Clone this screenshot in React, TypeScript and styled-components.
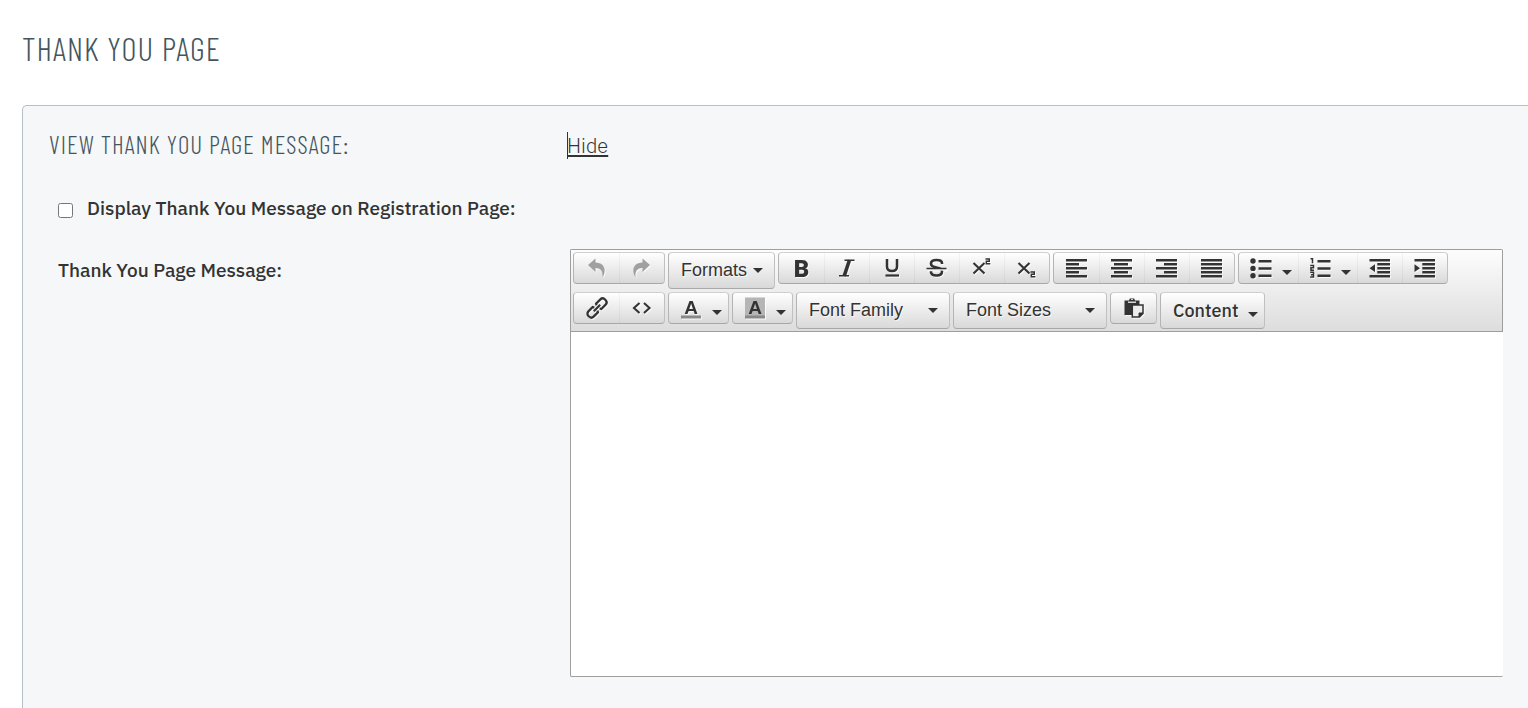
import React from "react";
import styled, { createGlobalStyle } from "styled-components";

const INK = "#333333";
const SLATE = "#455560";
const LINE = "#9e9e9e";
const SANS = `"IBM Plex Sans", Roboto, "Noto Sans", sans-serif`;
const NARROW = `"Barlow Condensed", "Liberation Sans Narrow", "Roboto Condensed", sans-serif`;
const ARIAL = `"Liberation Sans", Arial, sans-serif`;

const GlobalStyle = createGlobalStyle`
  *, *::before, *::after { box-sizing: border-box; }
  body { margin: 0; background: #ffffff; color: ${INK}; font-family: ${SANS}; }
`;

const Page = styled.main`
  min-height: 100vh;
  display: flex;
  flex-direction: column;
  padding: 26px 0 0 22px;
`;

const Title = styled.h1`
  margin: 0 0 35px;
  font: 300 33px/44px ${NARROW};
  letter-spacing: 1px;
  color: ${SLATE};
  text-transform: uppercase;
`;

const Panel = styled.section`
  flex: 1;
  padding: 18px 25px 31px 26px;
  background: #f5f7f9;
  border: 1px solid #b3bfc9;
  border-width: 1px 0 0 1px;
  border-top-left-radius: 5px;
`;

const PanelHeader = styled.header`
  display: grid;
  grid-template-columns: 518px 1fr;
  align-items: center;
  height: 40px;
`;

const SectionTitle = styled.h2`
  margin: 0;
  font: 300 25px/40px ${NARROW};
  letter-spacing: 1px;
  color: ${SLATE};
  text-transform: uppercase;
`;

const ToggleLink = styled.a`
  justify-self: start;
  margin-top: 2px;
  box-shadow: inset 1px 0 ${INK};
  font: 300 20px/27px ${SANS};
  color: ${INK};
  text-decoration: underline;
  text-decoration-thickness: 2px;
  text-underline-offset: 2px;
`;

const CheckRow = styled.div`
  display: flex;
  align-items: center;
  gap: 14px;
  height: 27px;
  margin: 30px 0 28px;
  padding-left: 9px;
`;

const CheckBox = styled.input`
  width: 15px;
  height: 15px;
  margin: 5px 0 0;
`;

const Label = styled.label`
  font: 500 19px/24px ${SANS};
`;

const EditorRow = styled.div`
  display: grid;
  grid-template-columns: 512px minmax(0, 1fr);
  align-items: start;
  padding-left: 9px;
`;

const EditorLabel = styled(Label)`
  padding-top: 9px;
`;

const Editor = styled.div`
  border: 1px solid ${LINE};
  border-right: 0;
  border-radius: 2px;
  background: #ffffff;
`;

const Toolbar = styled.div`
  display: flex;
  flex-direction: column;
  gap: 3px;
  padding: 2px;
  border: 1px solid ${LINE};
  border-width: 0 1px 1px 0;
  background: linear-gradient(#fdfdfd, #dddddd);
`;

const ToolRow = styled.div`
  display: flex;
  flex-wrap: wrap;
  align-items: flex-start;
  gap: 3px;
  min-height: 37px;
`;

const Group = styled.div`
  display: flex;
  border: 1px solid;
  border-color: #d0d0d0 #c0c0c0 #a8a8a8 #b4b4b4;
  border-radius: 4px;
  background: linear-gradient(#ffffff, #d9d9d9);
  overflow: hidden;
`;

const Tool = styled.button`
  display: flex;
  align-items: center;
  justify-content: center;
  width: 45px;
  height: 30px;
  padding: 0;
  border: 0;
  background: none;
  color: ${INK};

  & + & { box-shadow: inset 1px 0 rgba(0, 0, 0, 0.04); }
  &:disabled { color: #a0a0a0; }
`;

const SplitTool = styled(Tool)<{ $w: number }>`
  gap: 10px;
  width: ${({ $w }) => $w}px;
  padding-left: 5px;
`;

const MenuTool = styled.button<{ $w: number; $plex?: boolean }>`
  display: flex;
  align-items: center;
  justify-content: space-between;
  width: ${({ $w }) => $w}px;
  height: 35px;
  padding: 0 ${({ $plex }) => ($plex ? 6 : 11)}px ${({ $plex }) => ($plex ? 0 : 2)}px 12px;
  border: 0;
  background: none;
  color: ${INK};
  font: ${({ $plex }) => ($plex ? `500 18px/24px ${SANS}` : `400 18px/24px ${ARIAL}`)};
  text-shadow: 1px 1px rgba(255, 255, 255, 0.75);
`;

const Caret = styled.span<{ $low?: boolean }>`
  border: 5px solid transparent;
  border-top-color: ${INK};
  border-bottom: 0;
  margin-top: ${({ $low }) => ($low ? 8 : 2)}px;
`;

const Body = styled.textarea`
  display: block;
  width: 100%;
  height: 344px;
  padding: 8px;
  border: 0;
  border-radius: 2px;
  outline: 0;
  resize: none;
  background: #ffffff;
  font: 400 18px/24px ${SANS};
`;

const Svg = styled.svg`
  display: block;
  flex: none;
  overflow: visible;
  filter: drop-shadow(1px 1px 0 rgba(255, 255, 255, 0.8));
`;

type IconProps = { children: React.ReactNode };

/* Every glyph is drawn on a 22 x 20 grid. */
const Icon = ({ children }: IconProps) => (
  <Svg width="22" height="20" viewBox="0 0 22 20" fill="none" stroke="currentColor" aria-hidden="true">
    {children}
  </Svg>
);

const Bars = ({ rows }: { rows: [number, number][] }) => (
  <Icon>
    <g fill="currentColor" stroke="none">
      {rows.map(([x, w], i) => (
        <rect key={i} x={x} y={1 + i * 4} width={w} height="2.5" />
      ))}
    </g>
  </Icon>
);

const UndoShape = () => (
  <path
    d="M2 7 9.500 .5v4C16 4.800 19.500 8.500 18.500 14.200c-.3 2-1 3.600-2 5C17 13.500 15 10 9.500 10v4z"
    fill="currentColor"
    stroke="none"
  />
);

const Glyph = styled.text`
  fill: currentColor;
  stroke: none;
  text-anchor: middle;
`;

const Undo = () => <Icon><UndoShape /></Icon>;
const Redo = () => <Icon><g transform="translate(21 0) scale(-1 1)"><UndoShape /></g></Icon>;
const Bold = () => <Icon><Glyph x="10.500" y="18.500" fontFamily="Roboto" fontWeight="900" fontSize="24">B</Glyph></Icon>;
const Italic = () => (
  <Icon>
    <path d="M8.500 2.300H18.500M3 17.700H13" strokeWidth="1.600" />
    <path d="M13.500 2 8.200 18" strokeWidth="3.600" />
  </Icon>
);
const Underline = () => (
  <Icon>
    <path d="M6 1v7.500c0 3 2 4.500 5 4.500s5-1.500 5-4.500V1" strokeWidth="2.500" />
    <path d="M4.500 17.500h13.500" strokeWidth="2.200" />
  </Icon>
);
const Strike = () => (
  <Icon>
    <path d="M16 6V5c0-2-2-3-5.500-3S5 3 5 5.500 7 9 10.500 9.500s5.500 1.500 5.500 4-2 4-5.500 4S5 16.300 5 14v-.8" strokeWidth="2.600" />
    <path d="M.5 11.700h20" stroke="#eeeeee" strokeWidth="2" />
    <path d="M.5 10.500h20" strokeWidth="1.500" />
  </Icon>
);
const Script = ({ y }: { y: number }) => (
  <Icon>
    <path d="m2.500 5 11 10.500M13.500 5 2.500 15.500" strokeWidth="2.100" />
    <path d={`M14.500 ${y}h3.800v2.300h-3v2.500h4`} strokeWidth="1.400" />
  </Icon>
);
const ListIcon = ({ numbered }: { numbered?: boolean }) => (
  <Icon>
    <path d="M8.500 3.200h13M8.500 10.500h13M8.500 17.800h13" strokeWidth="2.400" />
    {numbered ? (
      <path d="M1.500 .8h2v4.400M1.200 7.500h3.300v2.200H2v2.600h3M1.200 14.300h3.300v4.700H1.200M2 16.700h2.500" strokeWidth="1.500" />
    ) : (
      <g fill="currentColor" stroke="none">
        <circle cx="3" cy="3" r="2.700" />
        <circle cx="3" cy="10.400" r="2.700" />
        <circle cx="3" cy="17.800" r="2.700" />
      </g>
    )}
  </Icon>
);
const Dent = ({ inward }: { inward?: boolean }) => (
  <Icon>
    <path d="M.5 2.200h20.500M8.300 6.200h12.700M8.300 10.200h12.700M8.300 14.200h12.700M.5 18.200h20.500" strokeWidth="2.500" />
    <path d={inward ? "M.5 6.300v7.800L6 10.200z" : "M6 6.300v7.800L.5 10.200z"} fill="currentColor" stroke="none" />
  </Icon>
);
const Link = () => (
  <Icon>
    <g transform="rotate(-45 11 10)" strokeWidth="2.200">
      <path d="M9.500 7.800 8.600 6.300H2.500C.5 6.300-.8 8-.8 10s1.300 3.700 3.300 3.700h6.100l.9-1.500" />
      <path d="M12.500 7.800l.9-1.500h6.100c2 0 3.300 1.700 3.300 3.700s-1.300 3.700-3.300 3.700h-6.100l-.9-1.500" />
      <path d="M6.500 10h9" />
    </g>
  </Icon>
);
const Code = () => <Icon><path d="m8.500 5-5.500 5 5.500 5M13 5l5.500 5-5.500 5" strokeWidth="2.100" /></Icon>;
const Letter = ({ filled }: { filled?: boolean }) => (
  <Icon>
    {filled && <path d="M1 -.5h20v20H1z" fill="#b5b5b5" stroke="none" />}
    <Glyph x="11" y="16" fontFamily="Liberation Sans" fontWeight="700" fontSize="19">A</Glyph>
    <path d="M1 19h20" stroke="#888888" strokeWidth="3" />
  </Icon>
);
const Paste = () => (
  <Icon>
    <path d="M1.500 2.500H6l.8-2h4.400l.8 2h4.500V7H9v10H1.500z" fill="currentColor" stroke="none" />
    <path d="M5 4.200h8" stroke="#f2f2f2" strokeWidth="1.300" />
    <path d="M8 1.500h2" stroke="#cccccc" />
    <path d="M9.300 7H20v8.500L16.500 19H9.300z" fill="#ededed" strokeWidth="1.500" />
    <path d="M16 19v-4h4z" fill="currentColor" strokeWidth="1" />
  </Icon>
);

export default function App() {
  return (
    <>
      <GlobalStyle />
      <Page>
        <Title>Thank You Page</Title>
        <Panel>
          <PanelHeader>
            <SectionTitle>View Thank You Page Message:</SectionTitle>
            <ToggleLink href="#message">Hide</ToggleLink>
          </PanelHeader>
          <CheckRow>
            <CheckBox type="checkbox" id="display" />
            <Label htmlFor="display">Display Thank You Message on Registration Page:</Label>
          </CheckRow>
          <EditorRow>
            <EditorLabel htmlFor="message">Thank You Page Message:</EditorLabel>
            <Editor>
              <Toolbar role="toolbar" aria-label="Formatting">
                <ToolRow>
                  <Group>
                    <Tool disabled aria-label="Undo"><Undo /></Tool>
                    <Tool disabled aria-label="Redo"><Redo /></Tool>
                  </Group>
                  <Group><MenuTool $w={105}>Formats<Caret /></MenuTool></Group>
                  <Group>
                    <Tool aria-label="Bold"><Bold /></Tool>
                    <Tool aria-label="Italic"><Italic /></Tool>
                    <Tool aria-label="Underline"><Underline /></Tool>
                    <Tool aria-label="Strikethrough"><Strike /></Tool>
                    <Tool aria-label="Superscript"><Script y={1} /></Tool>
                    <Tool aria-label="Subscript"><Script y={14} /></Tool>
                  </Group>
                  <Group>
                    <Tool aria-label="Align left"><Bars rows={[[0, 21], [0, 13], [0, 21], [0, 13], [0, 21]]} /></Tool>
                    <Tool aria-label="Align center"><Bars rows={[[0, 21], [3, 14], [0, 21], [3, 14], [0, 21]]} /></Tool>
                    <Tool aria-label="Align right"><Bars rows={[[0, 21], [8, 13], [0, 21], [8, 13], [0, 21]]} /></Tool>
                    <Tool aria-label="Justify"><Bars rows={[[0, 21], [0, 21], [0, 21], [0, 21], [0, 21]]} /></Tool>
                  </Group>
                  <Group>
                    <SplitTool $w={59} aria-label="Bullet list"><ListIcon /><Caret $low /></SplitTool>
                    <SplitTool $w={59} aria-label="Numbered list"><ListIcon numbered /><Caret $low /></SplitTool>
                    <Tool aria-label="Decrease indent"><Dent /></Tool>
                    <Tool aria-label="Increase indent"><Dent inward /></Tool>
                  </Group>
                </ToolRow>
                <ToolRow>
                  <Group>
                    <Tool aria-label="Insert link"><Link /></Tool>
                    <Tool aria-label="Source code"><Code /></Tool>
                  </Group>
                  <Group><SplitTool $w={59} aria-label="Text color"><Letter /><Caret $low /></SplitTool></Group>
                  <Group><SplitTool $w={59} aria-label="Background color"><Letter filled /><Caret $low /></SplitTool></Group>
                  <Group><MenuTool $w={152}>Font Family<Caret /></MenuTool></Group>
                  <Group><MenuTool $w={152}>Font Sizes<Caret /></MenuTool></Group>
                  <Group><Tool aria-label="Paste as text"><Paste /></Tool></Group>
                  <Group><MenuTool $w={103} $plex>Content<Caret $low /></MenuTool></Group>
                </ToolRow>
              </Toolbar>
              <Body id="message" />
            </Editor>
          </EditorRow>
        </Panel>
      </Page>
    </>
  );
}
